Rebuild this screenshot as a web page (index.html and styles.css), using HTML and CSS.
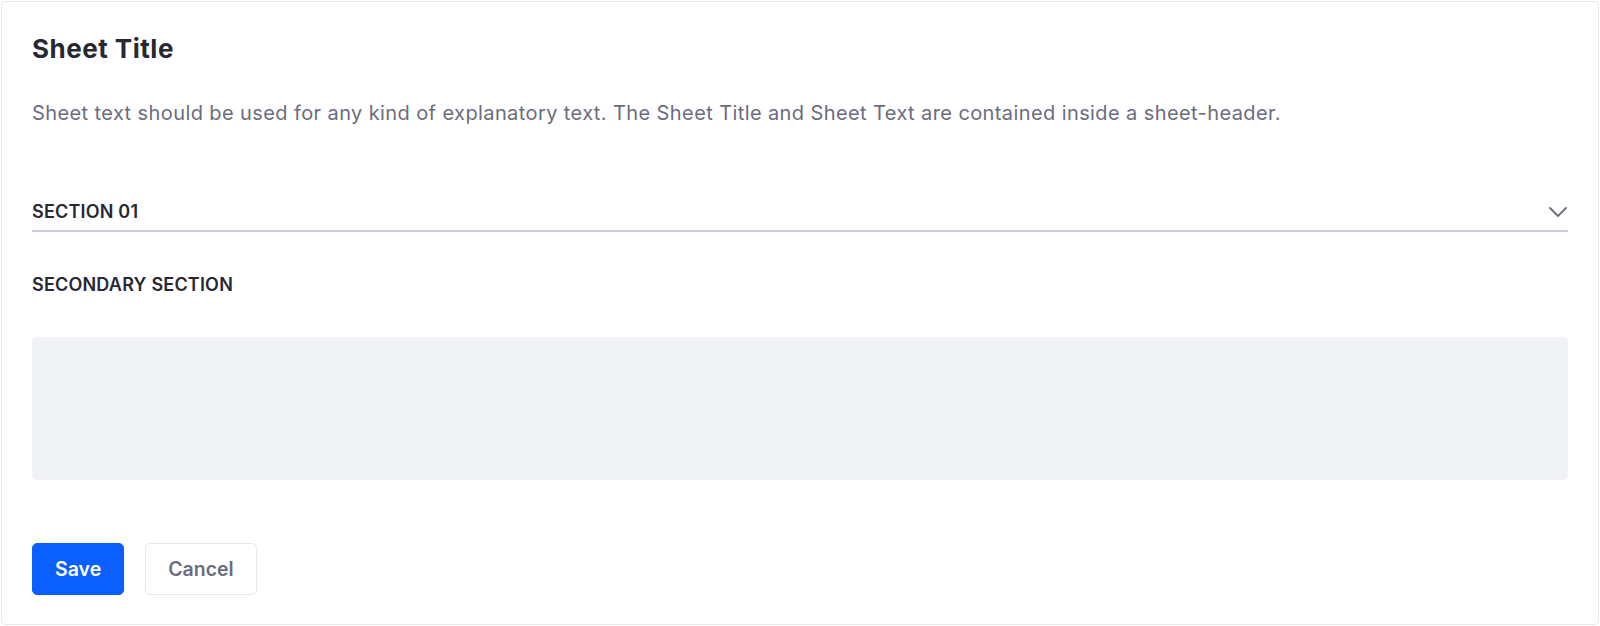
FILE: index.html
```html
<!DOCTYPE html>
<html lang="en">
<head>
<meta charset="utf-8">
<title>Sheet</title>
<link rel="stylesheet" href="styles.css">
</head>
<body>
<div class="sheet">
  <div class="sheet-header">
    <h2 class="sheet-title">Sheet Title</h2>
    <p class="sheet-text">Sheet text should be used for any kind of explanatory text. The Sheet Title and Sheet Text are contained inside a sheet-header.</p>
  </div>
  <div class="sheet-section">
    <div class="section-toggle">
      <span class="section-label">SECTION 01</span>
      <svg class="chevron" width="18" height="10" viewBox="0 0 18 10" aria-hidden="true"><path d="M1 1 L9 9 L17 1" fill="none" stroke="#6b6c7e" stroke-width="1.8" stroke-linecap="round" stroke-linejoin="round"/></svg>
    </div>
  </div>
  <div class="sheet-subsection">
    <h3 class="subsection-title">SECONDARY SECTION</h3>
    <div class="placeholder"></div>
  </div>
  <div class="sheet-footer">
    <button class="btn btn-primary">Save</button>
    <button class="btn btn-secondary">Cancel</button>
  </div>
</div>
</body>
</html>
```

FILE: styles.css
```css
html, body {
  margin: 0;
  padding: 0;
  background: #ffffff;
}
body {
  padding: 1px 1px 0 1px;
  font-family: Inter, "Noto Sans", sans-serif;
  color: #272833;
}
.sheet {
  border: 1px solid #e7e7ed;
  border-radius: 5px;
  padding: 30px 30px 29px 30px;
  background: #fff;
}
.sheet-header {
  display: flex;
  flex-direction: column;
}
.sheet-title {
  margin: 2px 0 0 0;
  font-size: 26px;
  line-height: 30px;
  font-weight: 700;
  letter-spacing: 0.5px;
  color: #272833;
}
.sheet-text {
  margin: 34px 0 0 0;
  font-size: 20px;
  line-height: 30px;
  letter-spacing: 0.4px;
  color: #6b6c7e;
}
.sheet-section {
  margin-top: 73px;
}
.section-toggle {
  display: flex;
  align-items: center;
  justify-content: space-between;
  height: 22px;
  padding-bottom: 7px;
  border-bottom: 2px solid #cdced9;
}
.section-label {
  font-size: 18px;
  line-height: 22px;
  font-weight: 600;
  letter-spacing: 0.2px;
  color: #272833;
}
.chevron {
  display: block;
  margin-right: 1px;
}
.sheet-subsection {
  margin-top: 42px;
}
.subsection-title {
  margin: 0;
  font-size: 18px;
  line-height: 22px;
  font-weight: 600;
  letter-spacing: 0.2px;
  color: #272833;
}
.placeholder {
  margin-top: 41px;
  height: 143px;
  background: #f1f2f5;
  border-radius: 5px;
}
.sheet-footer {
  margin-top: 63px;
  display: flex;
  gap: 21px;
}
.btn {
  font-family: Inter, "Noto Sans", sans-serif;
  font-size: 19.5px;
  line-height: 30px;
  font-weight: 600;
  padding: 10px 22px;
  border-radius: 5px;
  border: 1px solid transparent;
  cursor: pointer;
}
.btn-primary {
  background: #0b5fff;
  border-color: #0b5fff;
  color: #fff;
}
.btn-secondary {
  background: #fff;
  border-color: #e7e7ed;
  color: #6b6c7e;
}
```
